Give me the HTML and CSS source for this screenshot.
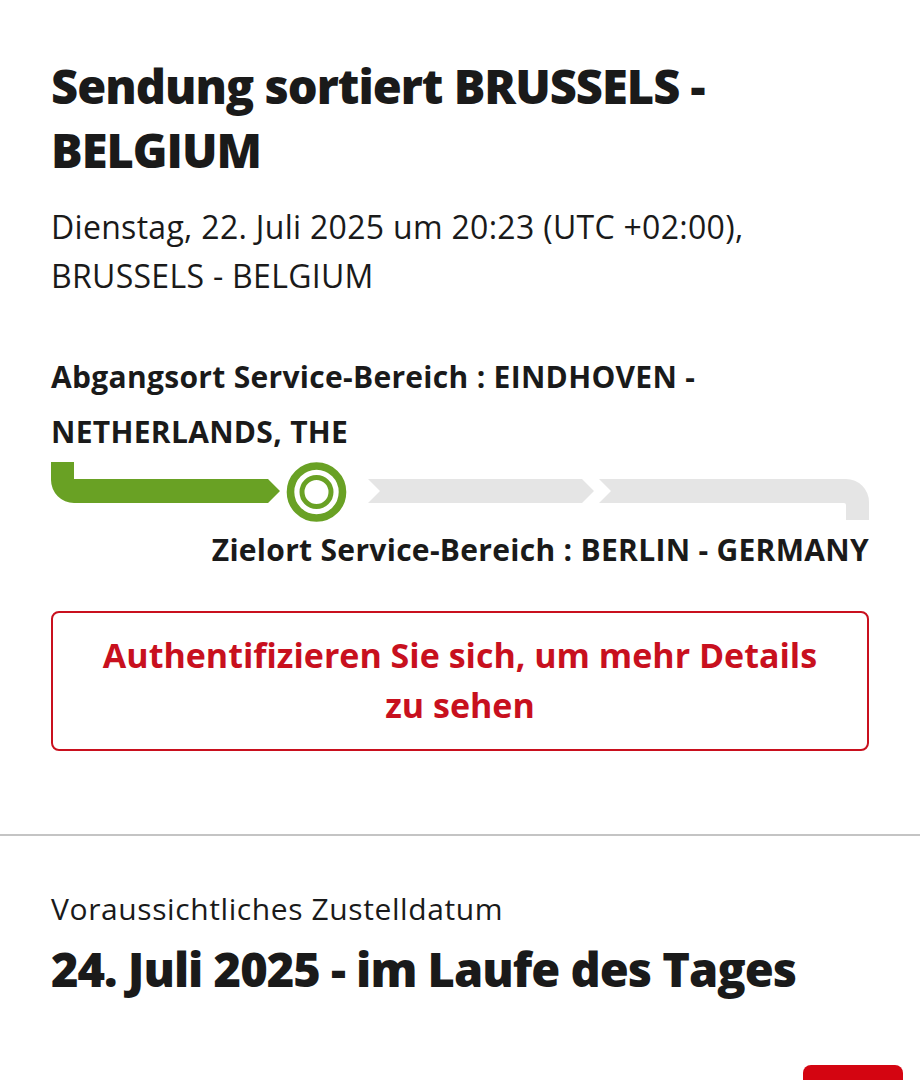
FILE: index.html
```html
<!DOCTYPE html>
<html lang="de">
<head>
<meta charset="utf-8">
<title>Sendungsverfolgung</title>
<link rel="stylesheet" href="styles.css">
</head>
<body>
<main class="page">
  <section class="event">
    <h1 class="title">Sendung sortiert BRUSSELS - BELGIUM</h1>
    <p class="meta">Dienstag, 22. Juli 2025 um 20:23 (UTC +02:00), BRUSSELS - BELGIUM</p>
    <p class="label origin">Abgangsort Service-Bereich : EINDHOVEN - NETHERLANDS, THE</p>
    <svg class="progress" width="818" height="62" viewBox="0 0 818 62" aria-hidden="true">
      <path class="seg-done" d="M0 2 H23 V19 H217 L229 31 L217 43 H23 A23 23 0 0 1 0 20 Z"/>
      <circle class="ring-outer" cx="265.5" cy="32" r="26" />
      <circle class="ring-inner" cx="265.5" cy="32" r="14.5" />
      <path class="seg-todo" d="M317 19 H531 L543 31 L531 43 H317 L329 31 Z"/>
      <path class="seg-todo" d="M548 19 H795 A23 23 0 0 1 818 42 V60 H795 V45 Q795 43 793 43 H548 L560 31 Z"/>
    </svg>
    <p class="label dest">Zielort Service-Bereich : BERLIN - GERMANY</p>
    <div class="auth-box">
      <a class="auth-link" href="#">Authentifizieren Sie sich, um mehr Details zu sehen</a>
    </div>
  </section>
  <hr class="divider">
  <section class="delivery">
    <p class="eta-label">Voraussichtliches Zustelldatum</p>
    <p class="eta">24. Juli 2025 - im Laufe des Tages</p>
    <div class="actions"><span class="red-btn"></span></div>
  </section>
</main>
</body>
</html>
```
FILE: styles.css
```css
html, body {
  margin: 0;
  padding: 0;
  background: #ffffff;
}
body {
  font-family: "Open Sans", "Noto Sans", sans-serif;
  color: #1a1a1a;
  overflow: hidden;
}
.page {
  width: 920px;
}
.event {
  padding: 54px 51px 0;
  display: flex;
  flex-direction: column;
}
.title {
  margin: 0;
  font-size: 47px;
  line-height: 64px;
  font-weight: 800;
  font-stretch: 92%;
  letter-spacing: -1px;
  width: 700px;
}
.meta {
  margin: 20px 0 0;
  font-size: 32px;
  line-height: 49px;
  font-weight: 400;
  letter-spacing: 0.3px;
  width: 720px;
}
.label {
  margin: 0;
  font-size: 30px;
  line-height: 55px;
  font-weight: 700;
  font-stretch: 92%;
  letter-spacing: 0.3px;
}
.origin {
  margin-top: 49px;
  width: 700px;
}
.progress {
  display: block;
  margin-top: 1px;
}
.seg-done { fill: #69a124; }
.seg-todo { fill: #e5e5e5; }
.ring-outer { fill: none; stroke: #69a124; stroke-width: 7.6; }
.ring-inner { fill: none; stroke: #69a124; stroke-width: 5; }
.dest {
  text-align: right;
}
.auth-box {
  margin-top: 34px;
  border: 2px solid #c9101e;
  border-radius: 8px;
  padding: 17px 40px 19px;
  text-align: center;
}
.auth-link {
  font-size: 34px;
  line-height: 50px;
  font-weight: 700;
  font-stretch: 100%;
  color: #c8101e;
  text-decoration: none;
}
.divider {
  margin: 83px 0 0;
  border: 0;
  height: 2px;
  background: #c4c4c4;
}
.delivery {
  padding: 53px 51px 0;
  display: flex;
  flex-direction: column;
}
.eta-label {
  margin: 0;
  font-size: 30px;
  line-height: 40px;
  font-weight: 400;
  letter-spacing: 0.6px;
}
.eta {
  margin: 10px 0 0;
  font-size: 47px;
  line-height: 60px;
  font-weight: 800;
  font-stretch: 92%;
  letter-spacing: -1px;
  white-space: nowrap;
}
.actions {
  display: flex;
  justify-content: flex-end;
  margin: 66px -34px 0 0;
}
.red-btn {
  display: block;
  width: 100px;
  height: 44px;
  background: #d40511;
  border-radius: 8px;
}
```
